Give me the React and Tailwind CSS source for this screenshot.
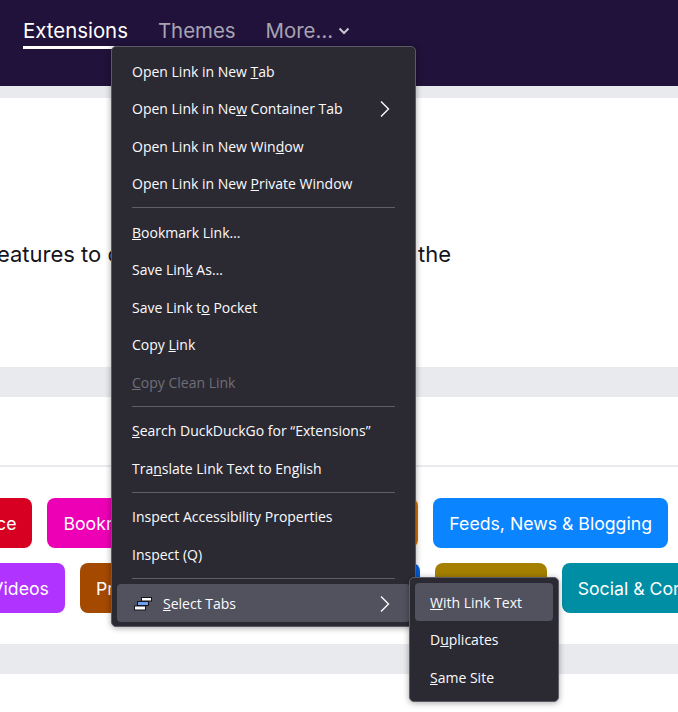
import React from "react";

const menuFont = { fontFamily: '"Open Sans", sans-serif' };

const Chevron = () => (
  <svg width="12" height="18" viewBox="0 0 12 18" fill="none" stroke="#fbfbfe" strokeWidth="1.4">
    <path d="M2 1.5 L9.5 9 L2 16.5" />
  </svg>
);

const TabsIcon = () => (
  <svg width="20" height="16" viewBox="0 0 20 16" className="shrink-0">
    <rect x="8.5" y="1.5" width="10" height="3.5" fill="#fff" stroke="#15141a" />
    <rect x="4.5" y="5.5" width="11" height="4" fill="#6f9ef0" stroke="#15141a" />
    <rect x="1.5" y="10" width="11" height="4" fill="#fff" stroke="#15141a" />
  </svg>
);

const MenuItem = ({ children, disabled, active, arrow, icon }) => (
  <div className={`flex items-center justify-between rounded pl-[15px] pr-[19px] text-[14px] whitespace-nowrap ${disabled ? "text-[#6f6e77]" : "text-[#fbfbfe]"} ${active ? "h-[38px] bg-[#52525e] pt-[1px]" : "h-[37.5px]"}`}>
    <span className="flex items-center">
      {icon}
      <span>{children}</span>
    </span>
    {arrow && <Chevron />}
  </div>
);

const Sep = () => <div className="mx-[15px] mb-[5.5px] mt-[4.5px] h-px bg-[#5f5e69]" />;

const Chip = ({ color, children }) => (
  <a className={`flex h-[50px] shrink-0 items-center rounded-lg px-4 pt-[2px] text-[17.68px] whitespace-nowrap text-white ${color}`}>{children}</a>
);

export default function App() {
  return (
    <div className="relative h-[712px] overflow-hidden bg-[#e8eaed] font-['Inter',sans-serif]">
      <nav className="h-[86px] bg-[#20123a] pl-[23px] pt-[17px]">
        <ul className="flex items-start gap-[30px] text-[20.4px] leading-7">
          <li className="border-b-[3px] border-white pb-[1px] text-white">Extensions</li>
          <li className="text-[#a8a3b3]">Themes</li>
          <li className="flex items-center gap-[5px] text-[#a8a3b3]">
            More…
            <svg width="12" height="8" viewBox="0 0 12 8" fill="none" stroke="#c9c6d0" strokeWidth="2">
              <path d="M1.5 1.5 L6 6 L10.5 1.5" />
            </svg>
          </li>
        </ul>
      </nav>

      <section className="mt-3 flex h-[269px] justify-start bg-white pt-[140px]">
        <p className="flex w-[451px] shrink-0 justify-end text-[22px] leading-8 whitespace-nowrap text-[#15141a]">
          <span>
            Explore powerful tools and features to <span className="tracking-[0.5px]">customize Firefox and make</span> the
          </span>
        </p>
      </section>

      <section className="mt-[30px] h-[247px] bg-white">
        <div className="h-[70px] border-b-2 border-[#e8eaed]" />
        <div className="flex flex-col gap-[15px] pt-[31px]">
          <div className="flex justify-end gap-[15px] pr-[10px]">
            <Chip color="bg-[#d70022]">Appearance</Chip>
            <Chip color="bg-[#ed00b5]">Bookmarks</Chip>
            <Chip color="bg-[#d76e00]">Download Management</Chip>
            <Chip color="bg-[#0a84ff]">Feeds, News &amp; Blogging</Chip>
          </div>
          <div className="-ml-[164px] flex gap-[15px]">
            <Chip color="bg-[#b033ff]">Photos, Music &amp; Videos</Chip>
            <Chip color="bg-[#a44900]">Privacy &amp; Security</Chip>
            <Chip color="bg-[#0060df]">Search Tools</Chip>
            <Chip color="bg-[#a47f00]">Shopping</Chip>
            <Chip color="bg-[#008ea4]">Social &amp; Communication</Chip>
          </div>
        </div>
      </section>

      <section className="mt-[30px] h-[38px] bg-white" />

      {/* context menu */}
      <div style={menuFont} className="absolute left-[111px] top-[46px] w-[305px] rounded-[5px] border border-[#5b5b66] bg-[#2b2a33] px-[5px] pb-[4px] pt-[5.5px] shadow-[0_1px_6px_rgba(0,0,0,0.35)]">
        <MenuItem>Open Link in New <u>T</u>ab</MenuItem>
        <MenuItem arrow>Open Link in Ne<u>w</u> Container Tab</MenuItem>
        <MenuItem>Open Link in New Win<u>d</u>ow</MenuItem>
        <MenuItem>Open Link in New <u>P</u>rivate Window</MenuItem>
        <Sep />
        <MenuItem><u>B</u>ookmark Link…</MenuItem>
        <MenuItem>Save Lin<u>k</u> As…</MenuItem>
        <MenuItem>Save Link t<u>o</u> Pocket</MenuItem>
        <MenuItem>Copy <u>L</u>ink</MenuItem>
        <MenuItem disabled><u>C</u>opy Clean Link</MenuItem>
        <Sep />
        <MenuItem><u>S</u>earch DuckDuckGo for “Extensions”</MenuItem>
        <MenuItem>Tra<u>n</u>slate Link Text to English</MenuItem>
        <Sep />
        <MenuItem>Inspect Accessibility Properties</MenuItem>
        <MenuItem>Inspect (Q)</MenuItem>
        <Sep />
        <MenuItem active arrow icon={<span className="mr-[10px] ml-[1px] flex"><TabsIcon /></span>}><u>S</u>elect Tabs</MenuItem>
      </div>

      {/* submenu */}
      <div style={menuFont} className="absolute left-[409px] top-[577px] w-[150px] rounded-[5px] border border-[#5b5b66] bg-[#2b2a33] px-[5px] py-[5px] shadow-[0_1px_6px_rgba(0,0,0,0.35)]">
        <MenuItem active><u>W</u>ith Link Text</MenuItem>
        <MenuItem>D<u>u</u>plicates</MenuItem>
        <MenuItem><u>S</u>ame Site</MenuItem>
      </div>
    </div>
  );
}
